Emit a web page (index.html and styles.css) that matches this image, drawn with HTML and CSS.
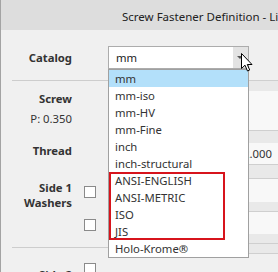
FILE: index.html
```html
<!DOCTYPE html>
<html>
<head>
<meta charset="utf-8">
<link rel="stylesheet" href="styles.css">
</head>
<body>
<div class="window">
  <div class="titlebar">Screw Fastener Definition - Library</div>
  <div class="content">
    <div class="left">
      <div class="catalog-row"><div class="lbl">Catalog</div></div>
      <div class="sep"></div>
      <div class="screw-sec">
        <div class="lbl screw">Screw</div>
        <div class="sub">P: 0.350</div>
        <div class="lbl thread">Thread</div>
        <div class="washers">
          <div class="lbl multi">Side 1<br>Washers</div>
          <div class="checks">
            <span class="chk"></span>
            <span class="chk second"></span>
          </div>
        </div>
      </div>
      <div class="sep"></div>
      <div class="washers side2">
        <div class="lbl multi">Side 2</div>
        <div class="checks"><span class="chk"></span></div>
      </div>
    </div>
    <div class="right">
      <div class="combo-cell">
        <div class="combo">
          <span class="combo-val">mm</span>
          <span class="combo-btn"><span class="arrow"></span></span>
        </div>
      </div>
      <div class="panel">
        <div class="prow shade h10"></div>
        <div class="prow light h39 bb"></div>
        <div class="prow shade h12"></div>
        <div class="prow light h22 bb val"><span>2.000</span></div>
        <div class="prow shade h13 bb"></div>
        <div class="prow light h23"></div>
        <div class="prow shade h10 bb"></div>
        <div class="prow light h22"></div>
        <div class="prow shade h10 bb"></div>
        <div class="prow shade h10 bb"></div>
      </div>
    </div>
    <ul class="dropdown">
      <li class="sel">mm</li>
      <li>mm-iso</li>
      <li>mm-HV</li>
      <li>mm-Fine</li>
      <li>inch</li>
      <li>inch-structural</li>
      <li>ANSI-ENGLISH</li>
      <li>ANSI-METRIC</li>
      <li>ISO</li>
      <li>JIS</li>
      <li>Holo-Krome®</li>
    </ul>
    <div class="highlight-box"></div>
    <svg class="cursor" width="13" height="19" viewBox="0 0 13 19">
      <path d="M0.5 0.5 L0.5 15.5 L4 12.2 L6.5 18 L8.7 17 L6.3 11.5 L11 11.5 Z" fill="#fff" stroke="#000" stroke-width="1" stroke-linejoin="miter"/>
    </svg>
  </div>
</div>
</body>
</html>
```
FILE: styles.css
```css
* { box-sizing: border-box; }
html, body { margin: 0; padding: 0; }
body {
  width: 278px;
  height: 272px;
  overflow: hidden;
  font-family: "Noto Sans", "Open Sans", sans-serif;
  font-size: 11.3px;
  color: #333;
  background: #f0f0f0;
}
.window {
  height: 272px;
  border-left: 1px solid #a3a3a3;
  background: #f0f0f0;
  overflow: hidden;
}
.titlebar {
  height: 30px;
  background: #dddddd;
  padding-left: 121px;
  line-height: 33px;
  font-size: 11.5px;
  color: #222;
  white-space: nowrap;
  overflow: hidden;
}
.content {
  position: relative;
  display: grid;
  grid-template-columns: 107px 170px;
  height: 242px;
  overflow: hidden;
}
.left { display: flex; flex-direction: column; }
.lbl { width: 71px; text-align: right; font-weight: 700; color: #333; }
.catalog-row { height: 50px; padding-top: 20px; line-height: 16px; }
.sep { height: 1px; margin-left: 11px; background: #cdcdcd; flex: none; }
.screw-sec { height: 166px; padding-top: 10px; flex: none; }
.screw { line-height: 16px; }
.sub { width: 71px; text-align: right; line-height: 16px; margin-top: 4px; color: #333; }
.thread { line-height: 16px; margin-top: 16px; }
.washers { display: flex; margin-top: 21px; }
.multi { line-height: 15px; }
.checks { display: flex; flex-direction: column; margin-left: 12px; padding-top: 6px; }
.chk { display: block; width: 12px; height: 12px; border: 1px solid #8a8a8a; background: #fff; }
.chk.second { margin-top: 21px; }
.side2 { margin-top: 0; flex: none; }
.side2 .multi { padding-top: 19px; }
.side2 .checks { padding-top: 15px; }

.combo-cell { height: 50px; padding-top: 16px; }
.combo {
  display: flex;
  width: 141px;
  height: 23px;
  border: 1px solid #acacac;
  background: #fff;
}
.combo-val { flex: 1; padding-left: 7px; line-height: 21px; color: #222; }
.combo-btn {
  width: 15px;
  background: #e3e3e3;
  display: flex;
  align-items: center;
  justify-content: center;
}
.arrow {
  width: 0; height: 0;
  border-left: 3px solid transparent;
  border-right: 3px solid transparent;
  border-top: 3px solid #555;
  margin-left: -2px;
}
.panel { border-top: 1px solid #cfcfcf; border-left: 1px solid #cfcfcf; }
.prow.shade { background: #e9e9e9; }
.prow.light { background: #f8f8f8; }
.prow.bb { border-bottom: 1px solid #cfcfcf; }
.h10 { height: 10px; } .h12 { height: 12px; } .h13 { height: 14px; }
.h22 { height: 22px; } .h23 { height: 23px; } .h39 { height: 40px; }
.val { padding-left: 134px; line-height: 22px; color: #333; }

.dropdown {
  position: absolute;
  left: 107px;
  top: 39px;
  width: 141px;
  margin: 0;
  padding: 0;
  list-style: none;
  background: #fff;
  border: 1px solid #a0a0a0;
}
.dropdown li {
  height: 17px;
  line-height: 17px;
  padding-left: 6px;
  color: #333;
  white-space: nowrap;
}
.dropdown li.sel { background: #b3e0fa; }
.highlight-box {
  position: absolute;
  left: 108px;
  top: 142px;
  width: 116px;
  height: 68px;
  border: 2px solid #d7141c;
}
.cursor { position: absolute; left: 240px; top: 23px; }
```
